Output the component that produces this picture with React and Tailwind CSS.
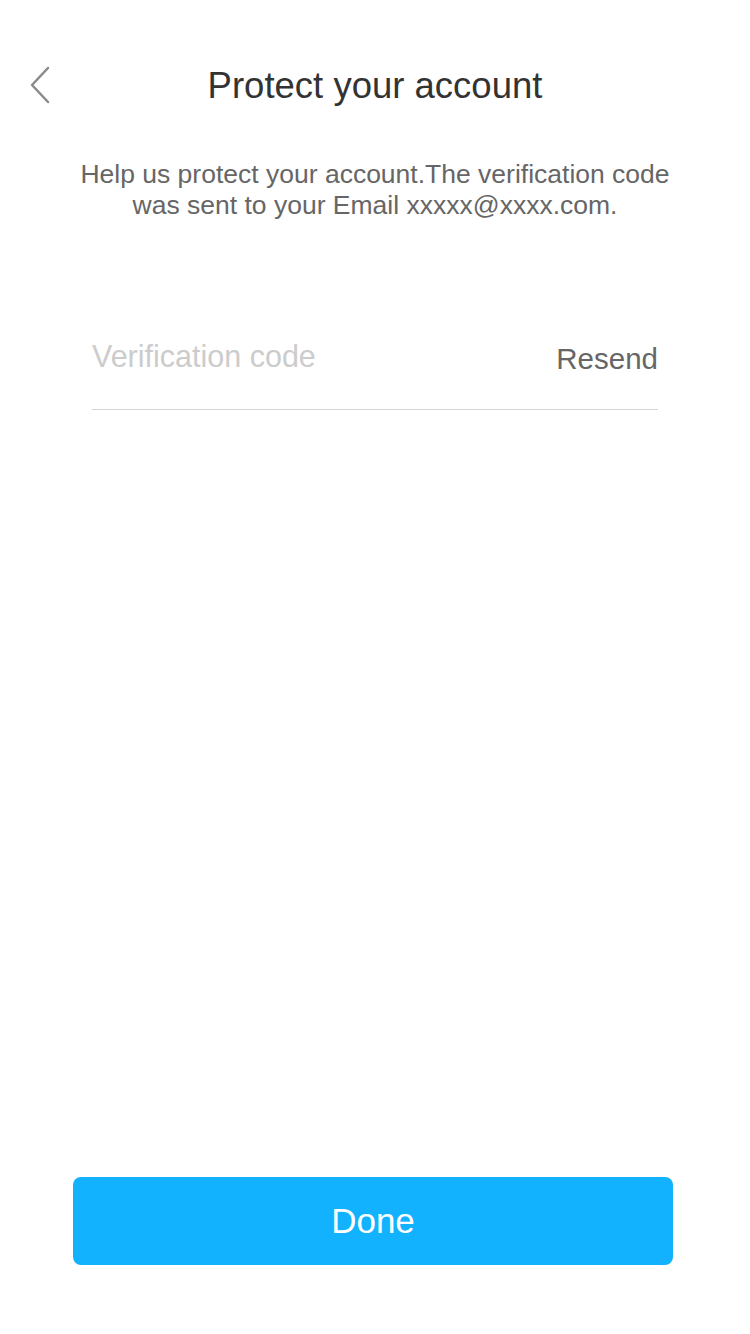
import React, { useState } from 'react';

const ChevronLeft = () => (
  <svg width="22" height="38" viewBox="0 0 22 38" fill="none">
    <path d="M19 2 L3 19 L19 36" stroke="#8a8a8a" strokeWidth="2.5" strokeLinecap="round" strokeLinejoin="round" />
  </svg>
);

const App = () => {
  const [code, setCode] = useState('');

  return (
    <div className="w-[750px] h-[1334px] bg-white flex flex-col font-['Liberation_Sans',Arial,sans-serif]">
      {/* header */}
      <div className="relative h-[172px] flex justify-center pt-[63px]">
        <button className="absolute left-[29px] top-[66px]">
          <ChevronLeft />
        </button>
        <h1 className="text-[36.5px] leading-[46px] text-[#333333]">Protect your account</h1>
      </div>

      <p className="text-center text-[26.5px] leading-[31px] text-[#666666] px-[40px] -mt-[13px]">
        Help us protect your account.The verification code
        <br />
        was sent to your Email xxxxx@xxxx.com.
      </p>

      {/* code input */}
      <div className="mx-[92px] mt-[103px] flex items-center justify-between border-b border-[#d4d4d4] h-[86px] pb-[14px]">
        <input
          value={code}
          onChange={(e) => setCode(e.target.value)}
          placeholder="Verification code"
          className="flex-1 min-w-0 text-[30.5px] text-[#333] placeholder:text-[#cccccc] outline-none bg-transparent -mt-[6px]"
        />
        <button className="text-[29.5px] text-[#666666]">Resend</button>
      </div>

      <div className="flex-1" />

      <div className="pb-[69px] pl-[73px]">
        <button className="w-[600px] h-[88px] rounded-[8px] bg-[#12b2ff] text-white text-[35px]">
          Done
        </button>
      </div>
    </div>
  );
};

export default App;
